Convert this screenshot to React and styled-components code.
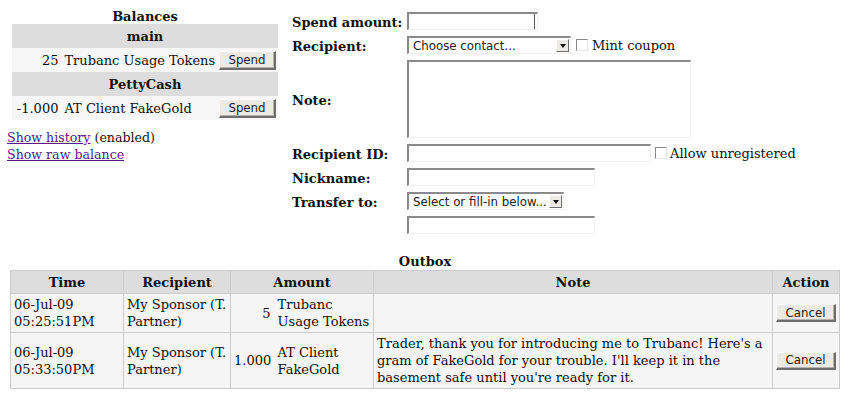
import React from 'react';
import styled, { createGlobalStyle } from 'styled-components';

const serif = '"DejaVu Serif", "Liberation Serif", serif';
const sans = '"DejaVu Sans", "Liberation Sans", sans-serif';

const GlobalStyle = createGlobalStyle`
  body {
    margin: 0;
    background: #ffffff;
    color: #111111;
    font-family: ${serif};
    font-size: 13px;
  }
`;

const Page = styled.div`
  padding: 5px 0 0 7px;
  width: 836px;
`;

const Top = styled.div`
  display: flex;
  align-items: flex-start;
`;

const LeftColumn = styled.div`
  width: 285px;
  flex: 0 0 auto;
  padding-top: 4px;
`;

const BalanceTable = styled.table`
  border-collapse: collapse;
  margin-left: 5px;
  width: 266px;
`;

const Caption = styled.caption`
  font-weight: bold;
  font-size: 13px;
  line-height: 15px;
`;

const GroupHeader = styled.th`
  background: #dddddd;
  font-weight: bold;
  height: 24px;
  padding: 0;
  text-align: center;
`;

const BalanceCell = styled.td`
  background: #f7f7f7;
  height: 24px;
  padding: ${props => props.$pad || '0'};
  text-align: ${props => props.$align || 'left'};
  white-space: nowrap;
`;

const Button = styled.button`
  font-family: ${sans};
  font-size: 11.8px;
  color: #222222;
  background: #edeae6;
  border-style: solid;
  border-width: 1px 2px 2px 1px;
  border-color: #ffffff #6d6d6d #6d6d6d #ffffff;
  padding: 0;
  width: ${props => props.$width || 57}px;
  height: ${props => props.$height || 19}px;
  box-shadow: inset -1px -1px 0 #b5b2ad;
  vertical-align: middle;
`;

const Links = styled.div`
  margin-top: 9px;
  line-height: 17px;
  font-size: 12.6px;
`;

const Link = styled.a`
  color: #551a8b;
  text-decoration: underline;
  cursor: pointer;
`;

const Form = styled.div`
  display: grid;
  grid-template-columns: 115px auto;
  row-gap: 6px;
  padding-top: 7px;
`;

const Label = styled.div`
  font-weight: bold;
  display: flex;
  align-items: center;
  padding-top: 2px;
  white-space: nowrap;
`;

const Field = styled.div`
  display: flex;
  align-items: center;
  gap: ${props => props.$gap || 4}px;
`;

const Input = styled.div`
  box-sizing: border-box;
  width: ${props => props.$width}px;
  height: ${props => props.$height || 18}px;
  background: #ffffff;
  border-style: solid;
  border-width: 2px 1px 1px 2px;
  border-color: #8a8a8a #f0f0f0 #f0f0f0 #8a8a8a;
  box-shadow: ${props => (props.$caret ? 'inset -2px 0 0 #ffffff, inset -3px 0 0 #555555' : 'none')};
`;

const Select = styled.div`
  box-sizing: border-box;
  width: ${props => props.$width}px;
  height: 18px;
  background: #ffffff;
  border-style: solid;
  border-width: 2px 1px 1px 2px;
  border-color: #8a8a8a #f0f0f0 #f0f0f0 #8a8a8a;
  display: flex;
  align-items: center;
  justify-content: space-between;
  padding: 0 1px 0 4px;
  font-family: ${sans};
  font-size: 11.8px;
  color: #222222;
  white-space: nowrap;
`;

const Arrow = styled.span`
  box-sizing: border-box;
  width: 13px;
  height: 13px;
  flex: 0 0 auto;
  background: #edeae6;
  border-style: solid;
  border-width: 1px;
  border-color: #ffffff #6d6d6d #6d6d6d #ffffff;
  display: flex;
  align-items: center;
  justify-content: center;

  &::after {
    content: '';
    border-left: 3px solid transparent;
    border-right: 3px solid transparent;
    border-top: 4px solid #111111;
  }
`;

const Check = styled.span`
  box-sizing: border-box;
  width: 12px;
  height: 12px;
  background: #ffffff;
  border-style: solid;
  border-width: 1px;
  border-color: #8a8a8a #e6e6e6 #e6e6e6 #8a8a8a;
  margin-left: 1px;
`;

const CheckLabel = styled.span`
  white-space: nowrap;
`;

const Outbox = styled.table`
  border-collapse: collapse;
  table-layout: fixed;
  width: 829px;
  margin: 20px 0 0 3px;
  line-height: 17px;
`;

const OutboxCaption = styled.caption`
  font-weight: bold;
  line-height: 16px;
`;

const Head = styled.th`
  background: #dddddd;
  border: 1px solid #cccccc;
  height: 22px;
  padding: 0 3px;
  font-weight: bold;
  text-align: center;
`;

const Cell = styled.td`
  background: #f5f5f5;
  border: 1px solid #cccccc;
  padding: 2px 3px;
  vertical-align: middle;
  text-align: ${props => props.$align || 'left'};
`;

const AmountCell = styled(Cell)`
  border-right: none;
  padding-right: 3px;
`;

const UnitCell = styled(Cell)`
  border-left: none;
  padding-left: 4px;
  padding-right: 0;
`;

const balances = [
  { name: 'main', amount: '25', unit: 'Trubanc Usage Tokens' },
  { name: 'PettyCash', amount: '-1.000', unit: 'AT Client FakeGold' },
];

const outbox = [
  {
    time: ['06-Jul-09', '05:25:51PM'],
    recipient: 'My Sponsor (T. Partner)',
    amount: '5',
    unit: ['Trubanc', 'Usage Tokens'],
    note: '',
  },
  {
    time: ['06-Jul-09', '05:33:50PM'],
    recipient: 'My Sponsor (T. Partner)',
    amount: '1.000',
    unit: ['AT Client', 'FakeGold'],
    note: "Trader, thank you for introducing me to Trubanc! Here's a gram of FakeGold for your trouble. I'll keep it in the basement safe until you're ready for it.",
  },
];

const columns = [113, 107, 43, 100, 399, 67];

const App = () => {
  return (
    <Page>
      <GlobalStyle />
      <Top>
        <LeftColumn>
          <BalanceTable>
            <Caption>Balances</Caption>
            <colgroup>
              <col style={{ width: 47 }} />
              <col />
              <col style={{ width: 64 }} />
            </colgroup>
            <tbody>
              {balances.map(b => (
                <React.Fragment key={b.name}>
                  <tr>
                    <GroupHeader colSpan={3}>{b.name}</GroupHeader>
                  </tr>
                  <tr>
                    <BalanceCell $align="right" $pad="0 0 0 3px">
                      {b.amount}
                    </BalanceCell>
                    <BalanceCell $pad="0 0 0 6px">{b.unit}</BalanceCell>
                    <BalanceCell $align="right" $pad="0 2px 0 0">
                      <Button>Spend</Button>
                    </BalanceCell>
                  </tr>
                </React.Fragment>
              ))}
            </tbody>
          </BalanceTable>
          <Links>
            <div>
              <Link>Show history</Link> (enabled)
            </div>
            <div>
              <Link>Show raw balance</Link>
            </div>
          </Links>
        </LeftColumn>

        <Form>
          <Label>Spend amount:</Label>
          <Field>
            <Input $width={131} $caret />
          </Field>

          <Label>Recipient:</Label>
          <Field>
            <Select $width={164}>
              Choose contact...
              <Arrow />
            </Select>
            <Check />
            <CheckLabel>Mint coupon</CheckLabel>
          </Field>

          <Label>Note:</Label>
          <Field>
            <Input $width={284} $height={78} />
          </Field>

          <Label>Recipient ID:</Label>
          <Field $gap={3}>
            <Input $width={244} />
            <Check />
            <CheckLabel>Allow unregistered</CheckLabel>
          </Field>

          <Label>Nickname:</Label>
          <Field>
            <Input $width={188} />
          </Field>

          <Label>Transfer to:</Label>
          <Field>
            <Select $width={157}>
              Select or fill-in below...
              <Arrow />
            </Select>
          </Field>

          <div />
          <Field>
            <Input $width={188} />
          </Field>
        </Form>
      </Top>

      <Outbox>
        <OutboxCaption>Outbox</OutboxCaption>
        <colgroup>
          {columns.map((w, i) => (
            <col key={i} style={{ width: w }} />
          ))}
        </colgroup>
        <thead>
          <tr>
            <Head>Time</Head>
            <Head>Recipient</Head>
            <Head colSpan={2}>Amount</Head>
            <Head>Note</Head>
            <Head>Action</Head>
          </tr>
        </thead>
        <tbody>
          {outbox.map((row, i) => (
            <tr key={i}>
              <Cell>
                {row.time[0]}
                <br />
                {row.time[1]}
              </Cell>
              <Cell>{row.recipient}</Cell>
              <AmountCell $align="right">{row.amount}</AmountCell>
              <UnitCell>
                {row.unit[0]}
                <br />
                {row.unit[1]}
              </UnitCell>
              <Cell>{row.note}</Cell>
              <Cell $align="center">
                <Button $width={60} $height={18}>Cancel</Button>
              </Cell>
            </tr>
          ))}
        </tbody>
      </Outbox>
    </Page>
  );
};

export default App;
